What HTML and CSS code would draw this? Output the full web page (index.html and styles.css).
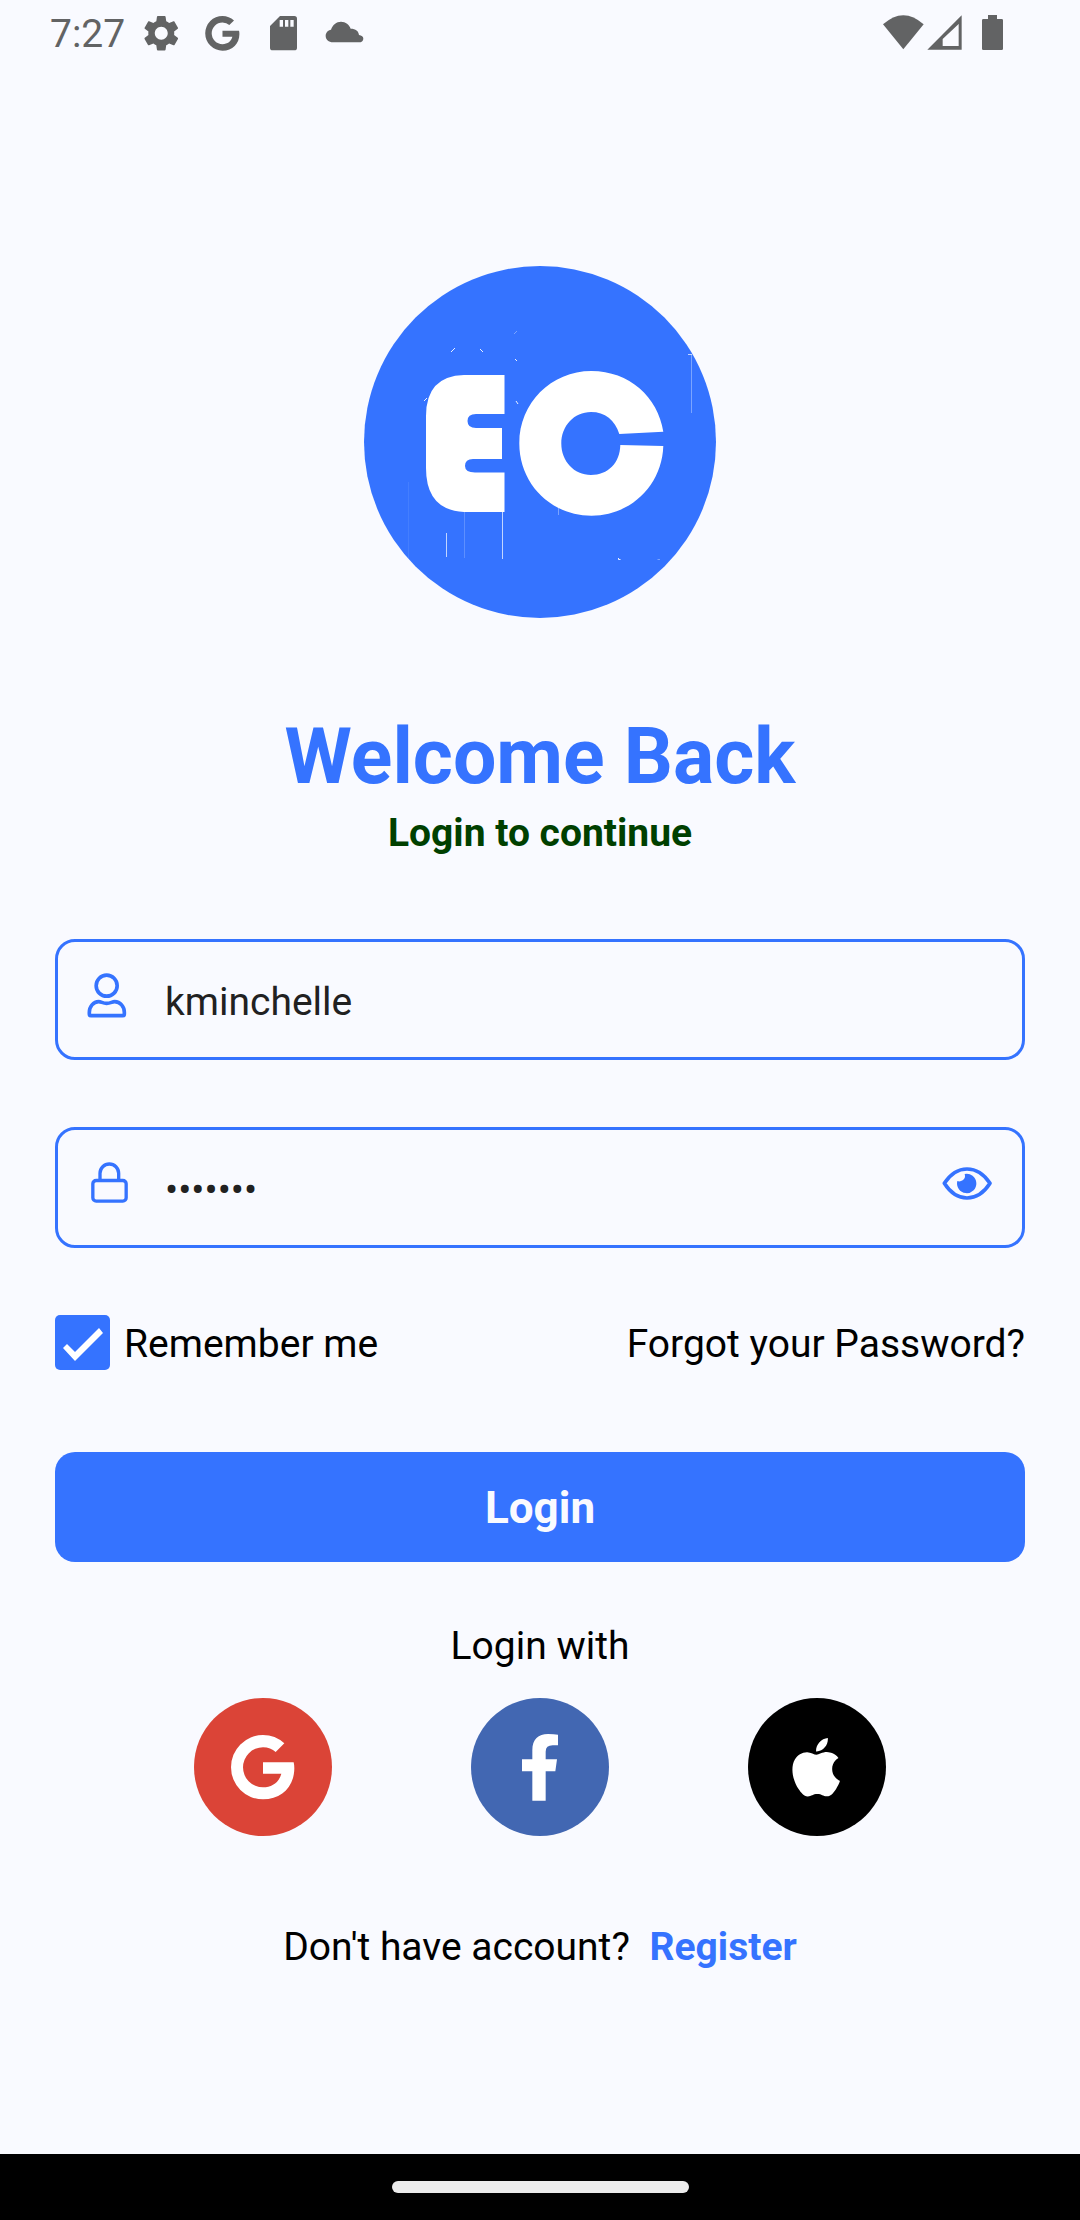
FILE: index.html
```html
<!DOCTYPE html>
<html lang="en">
<head>
<meta charset="utf-8">
<meta name="viewport" content="width=device-width, initial-scale=1">
<title>Login</title>
<link rel="stylesheet" href="styles.css">
</head>
<body>
<header class="status">
  <span class="status-time">7:27</span>
  <div class="status-notices">
    <svg class="notice" viewBox="303 0 183 198" aria-hidden="true"><path transform="translate(329 35) scale(5.4)" d="M19.14,12.94c0.04-0.3,0.06-0.61,0.06-0.94c0-0.32-0.02-0.64-0.07-0.94l2.03-1.58c0.18-0.14,0.23-0.41,0.12-0.61l-1.92-3.32c-0.12-0.22-0.37-0.29-0.59-0.22l-2.39,0.96c-0.5-0.38-1.03-0.7-1.62-0.94L14.4,2.81c-0.04-0.24-0.24-0.41-0.48-0.41h-3.84c-0.24,0-0.43,0.17-0.47,0.41L9.25,5.35C8.66,5.59,8.12,5.92,7.63,6.29L5.24,5.33c-0.22-0.08-0.47,0-0.59,0.22L2.74,8.87C2.62,9.08,2.66,9.34,2.86,9.48l2.03,1.58C4.84,11.36,4.8,11.69,4.8,12s0.02,0.64,0.07,0.94l-2.03,1.58c-0.18,0.14-0.23,0.41-0.12,0.61l1.92,3.32c0.12,0.22,0.37,0.29,0.59,0.22l2.39-0.96c0.5,0.38,1.03,0.7,1.62,0.94l0.36,2.54c0.05,0.24,0.24,0.41,0.48,0.41h3.84c0.24,0,0.44-0.17,0.47-0.41l0.36-2.54c0.59-0.24,1.13-0.56,1.62-0.94l2.39,0.96c0.22,0.08,0.47,0,0.59-0.22l1.92-3.32c0.12-0.22,0.07-0.47-0.12-0.61L19.14,12.94z M12,15.6c-1.98,0-3.6-1.62-3.6-3.6s1.62-3.6,3.6-3.6s3.6,1.62,3.6,3.6S13.98,15.6,12,15.6z"/></svg>
    <svg class="notice" viewBox="486 0 183 198" aria-hidden="true"><path transform="translate(443 -171) scale(.54)" d="M313 430A95 96 0 0 0 249 405A96 96.5 0 0 0 249 598C305 598 343 559 343 505Q343 495 341 487H249V521H304C298 546 277 562 249 562A60 60 0 0 1 249 442Q272 442 287 456Z"/></svg>
    <svg class="notice" viewBox="669 0 183 198" aria-hidden="true"><path fill-rule="evenodd" d="M750 48H793Q801 48 801 56V143Q801 151 793 151H728Q720 151 720 143V78ZM749 60V80H759V60ZM765 60V80H775V60ZM781 60V80H791V60Z"/></svg>
    <svg class="notice" viewBox="852 0 183 198" aria-hidden="true"><path d="M909 127C896 127 887 119 887 108C887 97 894 91 903 89C908 74 919 65 933 65C947 65 958 74 962 86C977 86 986 93 987 105C995 106 1000 110 1000 116C1000 123 994 127 987 127Z"/></svg>
  </div>
  <svg class="status-system" viewBox="60 0 378 198" aria-hidden="true"><path d="M69 73Q130 18 191 73L130 148Z"/><path fill-rule="evenodd" d="M202 149L305 46V149ZM248 138H296V72L248 117Z"/><path d="M384 45H411V57H425Q429 57 429 61V146Q429 150 425 150H370Q366 150 366 146V61Q366 57 370 57H384Z"/></svg>
</header>

<main class="page">
  <svg class="logo" viewBox="0 0 352 352" role="img" aria-label="EC">
    <circle class="logo-disc" cx="176" cy="176" r="176"/>
    <path class="logo-mark" d="M140.500 109H100Q62 110 62 150V202Q62 244 100 246H140.500V206.500H111Q101 206.500 101 200Q101 193 109 193H138V162H112Q103.500 162 103.500 155Q103.500 148 112 148H140.500Z"/>
    <path class="logo-mark" d="M299.300 165.700C294 131 265 105 227.500 105C187 105 155.300 137 155.300 177.300C155.300 218 187 249.700 227.500 249.700C267 249.700 298 219 299.300 180L256.300 179C256 197 244 209 227 209C210 209 197.300 195 197.300 177.500C197.300 160 210 146 227 146C241 146 251 154 255.300 168Z"/>
    <g class="logo-scratches">
      <path opacity=".35" d="M327.500 89V147M194.500 242V249M150 68L153 65M293.500 293.500H296"/>
      <path opacity=".7" d="M82.500 267V291M138.500 246V293M324 88.500H328"/>
      <path opacity=".2" d="M100.500 246V292"/>
      <path opacity=".08" d="M44.500 216V292"/>
      <path opacity=".9" d="M87 86L91 82M116 83L119 86M151 93L153 95M60 135L63 132M254.500 292V293.500H256.500M152 135L154 138"/>
    </g>
  </svg>

  <h1 class="title">Welcome Back</h1>
  <p class="subtitle">Login to continue</p>

  <form class="form">
    <label class="field">
      <svg class="field-icon" viewBox="140 150 135 150" aria-hidden="true"><g class="line line-bold"><circle cx="202" cy="197" r="31.500"/><path d="M150 277C150 260 162 245 178 245C186 245 190 250 202 250C214 250 218 245 226 245C243 245 255 260 255 277V282Q255 287 250 287H155Q150 287 150 282Z"/></g></svg>
      <input class="field-input" type="text" value="kminchelle" aria-label="Username">
    </label>
    <div class="field">
      <svg class="field-icon" viewBox="140 714 135 150" aria-hidden="true"><g class="line"><rect x="160.500" y="781.500" width="100" height="62" rx="10"/><path d="M182 786V760A28 28 0 0 1 238 760V786"/></g></svg>
      <input class="field-input" type="password" value="kminche" aria-label="Password">
      <button class="reveal" type="button" aria-label="Show password">
        <svg class="reveal-icon" viewBox="485 729 150 120" aria-hidden="true"><path class="line line-bold" d="M492 790Q520 747 560 747Q601 747 629 790Q601 834 560 834Q520 834 492 790Z"/><path class="pupil" d="M553 762A29 29 0 1 1 531 783Q539 786 547 781Q557 774 553 762Z"/></svg>
      </button>
    </div>
    <div class="options">
      <label class="remember"><input class="tick" type="checkbox" checked><span class="option-text">Remember me</span></label>
      <a class="option-text" href="#forgot">Forgot your Password?</a>
    </div>
    <button class="submit" type="submit">Login</button>
  </form>

  <p class="with">Login with</p>
  <div class="providers">
    <button class="provider google" type="button" aria-label="Google"><svg class="provider-icon" viewBox="42 294 414 414" aria-hidden="true"><path d="M313 430A95 96 0 0 0 249 405A96 96.5 0 0 0 249 598C305 598 343 559 343 505Q343 495 341 487H249V521H304C298 546 277 562 249 562A60 60 0 0 1 249 442Q272 442 287 456Z"/></svg></button>
    <button class="provider facebook" type="button" aria-label="Facebook"><svg class="provider-icon" viewBox="873 294 414 414" aria-hidden="true"><path d="M1057 602V514H1026V478H1057V450C1057 418 1075 402 1104 402Q1122 402 1134 404V436H1118Q1097 436 1097 455V478H1131L1126 514H1097V602Z"/></svg></button>
    <button class="provider apple" type="button" aria-label="Apple"><svg class="provider-icon" viewBox="354 294 414 414" aria-hidden="true"><path transform="translate(471 414) scale(7.3)" d="M12.152 6.896c-.948 0-2.415-1.078-3.96-1.04-2.04.027-3.91 1.183-4.961 3.014-2.117 3.675-.546 9.103 1.519 12.09 1.013 1.454 2.208 3.09 3.792 3.039 1.52-.065 2.09-.987 3.935-.987 1.831 0 2.35.987 3.96.948 1.637-.026 2.676-1.48 3.676-2.948 1.156-1.688 1.636-3.325 1.662-3.415-.039-.013-3.182-1.221-3.22-4.857-.026-3.04 2.48-4.494 2.597-4.559-1.429-2.09-3.623-2.324-4.39-2.376-2-.156-3.675 1.09-4.61 1.09zM15.53 3.83c.843-1.012 1.4-2.427 1.245-3.83-1.207.052-2.662.805-3.532 1.818-.78.896-1.454 2.338-1.273 3.714 1.338.104 2.715-.688 3.559-1.701"/></svg></button>
  </div>

  <p class="signup">Don't have account? <a class="register" href="#register">Register</a></p>
</main>

<footer class="navbar"><span class="handle"></span></footer>
</body>
</html>
```
FILE: styles.css
```css
:root {
  --blue: #3573ff;
  --paper: #f9faff;
}

* {
  box-sizing: border-box;
}

body {
  display: flex;
  flex-direction: column;
  min-height: 100vh;
  margin: 0;
  background: var(--paper);
  color: #000;
  font: 39px/46px Roboto, "Noto Sans", sans-serif;
}

h1,
p {
  margin: 0;
}

button {
  padding: 0;
  border: 0;
  font: inherit;
}

svg {
  display: block;
}

/* Status bar */
.status {
  display: flex;
  align-items: center;
  height: 66px;
  padding: 0 74px 0 50px;
  color: #626364;
  fill: currentColor;
}

.status-time {
  width: 81px;
  padding-top: 2px;
}

.status-notices {
  display: flex;
}

.notice {
  width: 61px;
  height: 66px;
}

.status-system {
  width: 126px;
  height: 66px;
  margin-left: auto;
}

/* Page */
.page {
  display: flex;
  flex: 1;
  flex-direction: column;
  padding: 200px 55px 88px;
}

.logo {
  width: 352px;
  height: 352px;
  align-self: center;
}

.logo-disc {
  fill: var(--blue);
}

.logo-mark {
  fill: #fff;
}

.logo-scratches {
  fill: none;
  stroke: #fff;
}

.title {
  margin-top: 94px;
  color: var(--blue);
  font-size: 77px;
  font-weight: 700;
  line-height: 90px;
  text-align: center;
}

.subtitle {
  margin-top: 8px;
  color: #004000;
  font-weight: 700;
  text-align: center;
}

/* Form */
.form {
  display: flex;
  flex-direction: column;
  gap: 67px;
  margin-top: 83px;
}

.field {
  display: flex;
  align-items: center;
  height: 121px;
  padding: 0 30px 0 28px;
  border: 3px solid var(--blue);
  border-radius: 20px;
}

.field-icon {
  flex: none;
  width: 45px;
  height: 50px;
  margin-bottom: 10px;
}

.line {
  fill: none;
  stroke: var(--blue);
  stroke-linejoin: round;
  stroke-width: 10;
}

.line-bold {
  stroke-width: 11;
}

.field-input {
  flex: 1;
  min-width: 0;
  margin-left: 34px;
  padding: 4px 0 0;
  border: 0;
  outline: 0;
  background: none;
  color: #212121;
  font: inherit;
}

.reveal {
  background: none;
}

.reveal-icon {
  width: 50px;
  height: 40px;
  margin-bottom: 10px;
}

.pupil {
  fill: var(--blue);
}

.options {
  display: flex;
  align-items: center;
  justify-content: space-between;
}

.remember {
  display: flex;
  align-items: center;
  gap: 14px;
}

.tick {
  width: 55px;
  height: 55px;
  margin: 0;
  border-radius: 5px;
  background: var(--paper);
  appearance: none;
}

.tick:checked {
  background: var(--blue);
}

.tick:checked::before {
  display: block;
  width: 55px;
  height: 55px;
  background: #fff;
  clip-path: polygon(8px 33px, 12px 29px, 20px 37px, 44px 13px, 48px 18px, 20px 46px);
  content: "";
}

.option-text {
  padding-top: 2px;
  color: inherit;
  text-decoration: none;
}

.submit {
  height: 110px;
  margin-top: 15px;
  padding-top: 2px;
  border-radius: 20px;
  background: var(--blue);
  color: var(--paper);
  font-size: 44px;
  font-weight: 700;
}

/* Other ways in */
.with {
  margin-top: 61px;
  text-align: center;
}

.providers {
  display: flex;
  justify-content: space-evenly;
  margin-top: 29px;
}

.provider {
  width: 138px;
  height: 138px;
  border-radius: 50%;
}

.provider-icon {
  width: 100%;
  height: 100%;
  fill: #fff;
}

.google {
  background: #db4437;
}

.facebook {
  background: #4267b2;
}

.apple {
  background: #000;
}

.signup {
  margin-top: 88px;
  text-align: center;
}

.register {
  margin-left: 10px;
  color: var(--blue);
  font-weight: 700;
  text-decoration: none;
}

/* Gesture bar */
.navbar {
  display: flex;
  align-items: center;
  justify-content: center;
  height: 66px;
  background: #000;
}

.handle {
  width: 297px;
  height: 12px;
  border-radius: 6px;
  background: #ececec;
}
```
